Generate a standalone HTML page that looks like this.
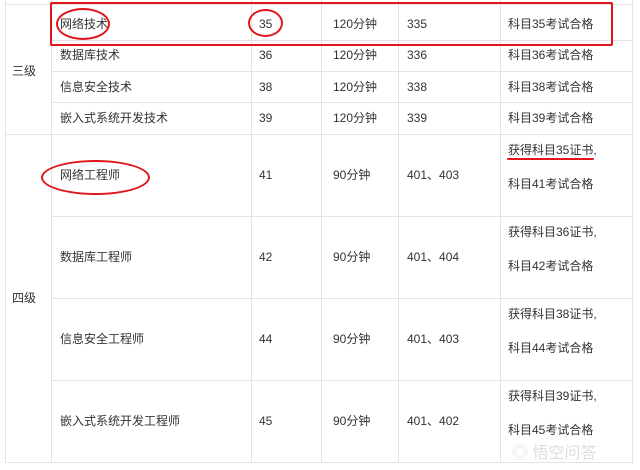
<!DOCTYPE html>
<html><head><meta charset="utf-8"><style>
body{margin:0;width:640px;height:470px;background:#fff;position:relative;overflow:hidden;font-family:"Liberation Sans","Noto Sans CJK SC",sans-serif;font-size:12px;color:#333}
.v{position:absolute;top:0;width:1px;background:#e3e3e3}
.h{position:absolute;height:1px;background:#e3e3e3}
.t{position:absolute;line-height:14px;white-space:nowrap}
.r{position:absolute;border:2px solid #e0161b}
.e{position:absolute;border:2px solid #e0161b;border-radius:50%}
</style></head><body>
<div class="v" style="left:5px;height:463px"></div>
<div class="v" style="left:51px;height:463px"></div>
<div class="v" style="left:251px;height:463px"></div>
<div class="v" style="left:321px;height:463px"></div>
<div class="v" style="left:398px;height:463px"></div>
<div class="v" style="left:500px;height:463px"></div>
<div class="v" style="left:632px;height:463px"></div>
<div class="h" style="left:5px;width:628px;top:4px"></div>
<div class="h" style="left:51px;width:582px;top:40px"></div>
<div class="h" style="left:51px;width:582px;top:71px"></div>
<div class="h" style="left:51px;width:582px;top:102px"></div>
<div class="h" style="left:5px;width:628px;top:134px"></div>
<div class="h" style="left:51px;width:582px;top:216px"></div>
<div class="h" style="left:51px;width:582px;top:298px"></div>
<div class="h" style="left:51px;width:582px;top:380px"></div>
<div class="h" style="left:5px;width:628px;top:462px"></div>

<div class="t" style="left:12px;top:64px">三级</div>
<div class="t" style="left:12px;top:291px">四级</div>

<div class="t" style="left:60px;top:17px">网络技术</div><div class="t" style="left:259px;top:17px">35</div><div class="t" style="left:333px;top:17px">120分钟</div><div class="t" style="left:407px;top:17px">335</div><div class="t" style="left:508px;top:17px">科目35考试合格</div>
<div class="t" style="left:60px;top:48px">数据库技术</div><div class="t" style="left:259px;top:48px">36</div><div class="t" style="left:333px;top:48px">120分钟</div><div class="t" style="left:407px;top:48px">336</div><div class="t" style="left:508px;top:48px">科目36考试合格</div>
<div class="t" style="left:60px;top:80px">信息安全技术</div><div class="t" style="left:259px;top:80px">38</div><div class="t" style="left:333px;top:80px">120分钟</div><div class="t" style="left:407px;top:80px">338</div><div class="t" style="left:508px;top:80px">科目38考试合格</div>
<div class="t" style="left:60px;top:111px">嵌入式系统开发技术</div><div class="t" style="left:259px;top:111px">39</div><div class="t" style="left:333px;top:111px">120分钟</div><div class="t" style="left:407px;top:111px">339</div><div class="t" style="left:508px;top:111px">科目39考试合格</div>

<div class="t" style="left:60px;top:168px">网络工程师</div><div class="t" style="left:259px;top:168px">41</div><div class="t" style="left:333px;top:168px">90分钟</div><div class="t" style="left:407px;top:168px">401、403</div><div class="t" style="left:508px;top:143px">获得科目35证书,</div><div class="t" style="left:508px;top:177px">科目41考试合格</div>
<div class="t" style="left:60px;top:250px">数据库工程师</div><div class="t" style="left:259px;top:250px">42</div><div class="t" style="left:333px;top:250px">90分钟</div><div class="t" style="left:407px;top:250px">401、404</div><div class="t" style="left:508px;top:225px">获得科目36证书,</div><div class="t" style="left:508px;top:259px">科目42考试合格</div>
<div class="t" style="left:60px;top:332px">信息安全工程师</div><div class="t" style="left:259px;top:332px">44</div><div class="t" style="left:333px;top:332px">90分钟</div><div class="t" style="left:407px;top:332px">401、403</div><div class="t" style="left:508px;top:307px">获得科目38证书,</div><div class="t" style="left:508px;top:341px">科目44考试合格</div>
<div class="t" style="left:60px;top:414px">嵌入式系统开发工程师</div><div class="t" style="left:259px;top:414px">45</div><div class="t" style="left:333px;top:414px">90分钟</div><div class="t" style="left:407px;top:414px">401、402</div><div class="t" style="left:508px;top:389px">获得科目39证书,</div><div class="t" style="left:508px;top:423px">科目45考试合格</div>

<div class="t" style="left:512px;top:445px;font-size:16px;color:#ddd;line-height:18px">◎ 悟空问答</div>

<div class="r" style="left:50px;top:2px;width:559px;height:40px;border-radius:2px"></div>
<div class="e" style="left:56px;top:8px;width:50px;height:28px"></div>
<div class="e" style="left:248px;top:9px;width:31px;height:24px"></div>
<div class="e" style="left:41px;top:160px;width:105px;height:31px"></div>
<div style="position:absolute;left:507px;top:158px;width:87px;height:2px;background:#e0161b;border-radius:1px"></div>
</body></html>
